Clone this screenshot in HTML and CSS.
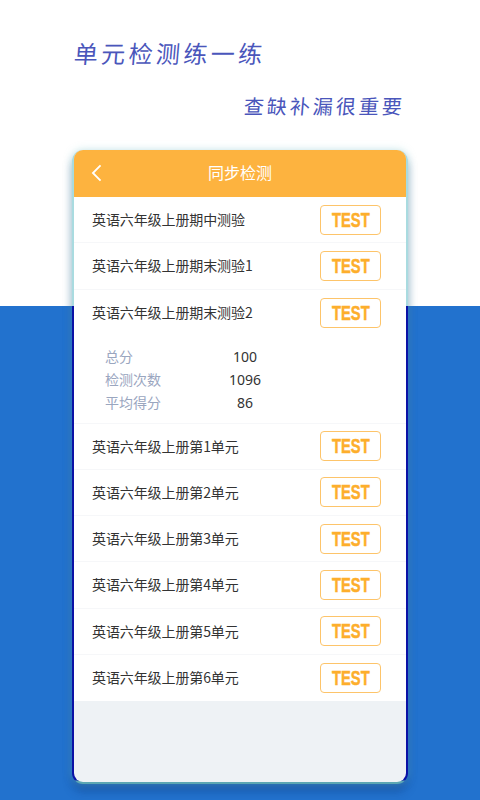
FILE: index.html
```html
<!DOCTYPE html>
<html lang="zh-CN">
<head>
<meta charset="utf-8">
<title>同步检测</title>
<link rel="stylesheet" href="styles.css">
</head>
<body>
<main class="page">
  <header class="hero">
    <h1 class="title">单元检测练一练</h1>
    <p class="subtitle">查缺补漏很重要</p>
  </header>
  <section class="frame">
    <div class="card">
      <div class="bar">
        <svg class="back" viewBox="0 0 12 20" aria-hidden="true"><path d="M10.5 1.5 2 10l8.5 8.5"/></svg>
        <span class="bar-title">同步检测</span>
      </div>
      <ul class="list">
        <li class="row"><span class="name">英语六年级上册期中测验</span><span class="test"><b>TEST</b></span></li>
        <li class="row"><span class="name">英语六年级上册期末测验1</span><span class="test"><b>TEST</b></span></li>
        <li class="row open">
          <div class="row-head"><span class="name">英语六年级上册期末测验2</span><span class="test"><b>TEST</b></span></div>
          <dl class="stats">
            <div class="stat"><dt>总分</dt><dd>100</dd></div>
            <div class="stat"><dt>检测次数</dt><dd>1096</dd></div>
            <div class="stat"><dt>平均得分</dt><dd>86</dd></div>
          </dl>
        </li>
        <li class="row"><span class="name">英语六年级上册第1单元</span><span class="test"><b>TEST</b></span></li>
        <li class="row"><span class="name">英语六年级上册第2单元</span><span class="test"><b>TEST</b></span></li>
        <li class="row"><span class="name">英语六年级上册第3单元</span><span class="test"><b>TEST</b></span></li>
        <li class="row"><span class="name">英语六年级上册第4单元</span><span class="test"><b>TEST</b></span></li>
        <li class="row"><span class="name">英语六年级上册第5单元</span><span class="test"><b>TEST</b></span></li>
        <li class="row"><span class="name">英语六年级上册第6单元</span><span class="test"><b>TEST</b></span></li>
      </ul>
    </div>
  </section>
</main>
</body>
</html>
```

FILE: styles.css
```css
* { box-sizing: border-box; margin: 0; padding: 0; }
html, body { width: 480px; height: 800px; overflow: hidden; }
body { font-family: "Noto Sans CJK SC", "Liberation Sans", sans-serif; color: #333; }

.page {
  width: 480px;
  height: 800px;
  background: linear-gradient(#fff 306px, #2272ce 306px);
  display: flex;
  flex-direction: column;
}

.hero { height: 150px; padding: 35px 75px 0 74px; }
.title {
  font-size: 24px;
  line-height: 36px;
  font-weight: 400;
  letter-spacing: 3.4px;
  color: #4a56bb;
  transform: skewX(-5deg);
}
.subtitle {
  margin-top: 20px;
  text-align: right;
  font-size: 20px;
  line-height: 30px;
  letter-spacing: 3px;
  color: #4a56bb;
  transform: skewX(-5deg);
}

.frame {
  width: 336px;
  height: 634px;
  margin-left: 72px;
  padding: 0 2px 2px;
  border-radius: 11px;
  background: linear-gradient(#a9dbe0 156px, #0b12a6 156px, #0b12a6 630px, #5ba6b2 631px);
  box-shadow: 0 0 9px rgba(120, 200, 205, .4), 0 7px 10px rgba(10, 40, 100, .35);
}
.card {
  height: 632px;
  background: #eef2f5;
  border-radius: 9px;
  overflow: hidden;
}

.bar {
  height: 47px;
  padding-bottom: 3px;
  background: #fdb33f;
  display: flex;
  align-items: center;
  justify-content: center;
  position: relative;
  color: #fff;
  font-size: 16px;
}
.back {
  position: absolute;
  left: 17px;
  top: 14px;
  width: 11px;
  height: 18px;
  fill: none;
  stroke: #fff;
  stroke-width: 2;
}

.list { list-style: none; background: #fff; }
.row {
  height: 46.25px;
  padding: 0 25px 0 18px;
  display: flex;
  align-items: center;
  justify-content: space-between;
  border-bottom: 1px solid #f6f7f9;
}
.row:last-child { border-bottom: 0; }
.row.open {
  height: 134px;
  display: block;
  padding: 0;
}
.row-head {
  height: 46px;
  padding: 0 25px 0 18px;
  display: flex;
  align-items: center;
  justify-content: space-between;
}
.name { font-size: 14px; line-height: 20px; color: #333; letter-spacing: -.1px; margin-bottom: 1px; }
.test {
  width: 61px;
  height: 30px;
  border: 1.5px solid #fdc46a;
  border-radius: 4px;
  display: flex;
  align-items: center;
  justify-content: center;
  color: #fdae2c;
}
.test b {
  display: block;
  font-family: "Liberation Sans", sans-serif;
  font-weight: 700;
  font-size: 21px;
  line-height: 24px;
  -webkit-text-stroke: .5px #fdae2c;
  transform: scaleX(.7);
}

.stats { padding: 9px 0 0 31px; }
.stat { display: flex; height: 23px; align-items: center; font-size: 14px; }
.stat dt { width: 80px; color: #9aa6bf; }
.stat dd { width: 120px; text-align: center; color: #333; font-family: "Noto Sans", sans-serif; }
```
